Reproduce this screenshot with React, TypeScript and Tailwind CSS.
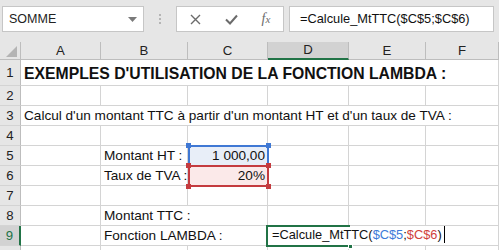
import React, { ReactNode } from 'react'

const font = "font-['Liberation_Sans',Arial,sans-serif]"

// column widths: row header, A, B, C, D, E, F
const widths = [
  'w-[21px]',
  'w-[80px]',
  'w-[87px]',
  'w-[80px]',
  'w-[81px]',
  'w-[77px]',
  'w-[73px]',
]

type Cell = {
  text?: ReactNode
  right?: boolean
  bold?: boolean
  open?: boolean // text runs over the next cell, hide the gridline
  className?: string
}

type Row = {
  n: number
  height: string
  cells: Cell[]
  active?: boolean
}

const rows: Row[] = [
  {
    n: 1,
    height: 'h-[26px]',
    cells: [
      { text: "EXEMPLES D'UTILISATION DE LA FONCTION LAMBDA :", bold: true, open: true },
      { open: true },
      { open: true },
      { open: true },
      { open: true },
      {},
    ],
  },
  { n: 2, height: 'h-[20px]', cells: [{}, {}, {}, {}, {}, {}] },
  {
    n: 3,
    height: 'h-[20px]',
    cells: [
      {
        text: "Calcul d'un montant TTC à partir d'un montant HT et d'un taux de TVA :",
        open: true,
      },
      { open: true },
      { open: true },
      { open: true },
      { open: true },
      {},
    ],
  },
  { n: 4, height: 'h-[20px]', cells: [{}, {}, {}, {}, {}, {}] },
  {
    n: 5,
    height: 'h-[20px]',
    cells: [
      {},
      { text: 'Montant HT :' },
      { text: '1 000,00', right: true, className: 'bg-[#e8eef8]' },
      {},
      {},
      {},
    ],
  },
  {
    n: 6,
    height: 'h-[20px]',
    cells: [
      {},
      { text: 'Taux de TVA :' },
      { text: '20%', right: true, className: 'bg-[#fbe9e9]' },
      {},
      {},
      {},
    ],
  },
  { n: 7, height: 'h-[20px]', cells: [{}, {}, {}, {}, {}, {}] },
  {
    n: 8,
    height: 'h-[20px]',
    cells: [{}, { text: 'Montant TTC :', open: true }, {}, {}, {}, {}],
  },
  {
    n: 9,
    height: 'h-[20px]',
    active: true,
    cells: [
      {},
      { text: 'Fonction LAMBDA :', open: true },
      {},
      {
        text: (
          <span className="text-[12.8px] pl-[1px]">
            =Calcule_MtTTC(<span className="text-[#3d7bd9]">$C$5</span>;
            <span className="text-[#d0413d]">$C$6</span>)
            <span className="inline-block w-px h-[17px] bg-black align-[-4px] ml-[2px]" />
          </span>
        ),
        open: true,
      },
      { open: true },
      {},
    ],
  },
  { n: 10, height: 'h-[20px]', cells: [{}, {}, {}, {}, {}, {}] },
]

export default function App() {
  return (
    <div className={`w-[499px] h-[250px] overflow-hidden bg-white text-[#111] ${font}`}>
      <FormulaBar />
      <div className="relative">
        <HeaderRow />
        {rows.map((row) => (
          <SheetRow key={row.n} row={row} />
        ))}
        <Selections />
      </div>
    </div>
  )
}

function FormulaBar() {
  return (
    <div className="h-[42px] bg-[#e6e6e6] flex items-start pt-[6px] pl-[2px]">
      <div className="w-[142px] h-[26px] bg-white border border-[#c6c6c6] flex items-center justify-between pl-[6px] pr-[6px]">
        <span className="text-[12.5px] text-[#222]">SOMME</span>
        <svg width="9" height="5" viewBox="0 0 9 5">
          <path d="M0 0h9L4.5 5z" fill="#7a7a7a" />
        </svg>
      </div>
      <div className="w-[32px] h-[26px] flex flex-col items-center justify-center gap-[2px]">
        <span className="w-[2px] h-[2px] bg-[#b5b5b5]" />
        <span className="w-[2px] h-[2px] bg-[#b5b5b5]" />
        <span className="w-[2px] h-[2px] bg-[#b5b5b5]" />
      </div>
      <div className="w-[108px] h-[26px] bg-white border border-[#c6c6c6] flex items-center">
        <div className="w-[36px] flex justify-center">
          <svg width="11" height="11" viewBox="0 0 11 11">
            <path d="M1 1l9 9M10 1l-9 9" stroke="#6b6b6b" strokeWidth="1.4" />
          </svg>
        </div>
        <div className="w-[36px] flex justify-center">
          <svg width="13" height="11" viewBox="0 0 13 11">
            <path d="M1 5.5l4 4L12 1.5" stroke="#6b6b6b" strokeWidth="2" fill="none" />
          </svg>
        </div>
        <div className="w-[34px] flex justify-center">
          <span className="font-['Liberation_Serif',serif] italic text-[14px] text-[#6b6b6b] leading-none">
            f<span className="text-[11px]">x</span>
          </span>
        </div>
      </div>
      <div className="ml-[5px] w-[205px] h-[26px] bg-white border border-[#c6c6c6] flex items-center pl-[10px]">
        <span className="text-[12.8px] text-[#111]">=Calcule_MtTTC($C$5;$C$6)</span>
      </div>
    </div>
  )
}

function HeaderRow() {
  const letters = ['A', 'B', 'C', 'D', 'E', 'F']
  return (
    <div className="flex h-[18px]">
      <div className={`${widths[0]} shrink-0 h-full bg-[#e6e6e6] border-r border-b border-[#bdbdbd] relative`}>
        <svg className="absolute right-[3px] bottom-[2px]" width="11" height="11" viewBox="0 0 11 11">
          <path d="M11 0V11H0z" fill="#b4b4b4" />
        </svg>
      </div>
      {letters.map((l, i) => (
        <div
          key={l}
          className={`${widths[i + 1]} shrink-0 h-full flex items-center justify-center text-[13.2px] border-r ${
            l === 'D'
              ? 'bg-[#d2d2d2] border-[#bdbdbd] border-b-2 border-b-[#217346] text-[#222]'
              : 'bg-[#e6e6e6] border-[#bdbdbd] border-b text-[#222]'
          }`}
        >
          {l}
        </div>
      ))}
    </div>
  )
}

function SheetRow({ row }: { row: Row }) {
  return (
    <div className={`flex ${row.height}`}>
      <div
        className={`${widths[0]} shrink-0 h-full flex items-center justify-center text-[13.2px] border-b border-b-[#d4d4d4] ${
          row.active
            ? 'bg-[#d2d2d2] border-r-2 border-r-[#217346] text-[#217346]'
            : 'bg-[#e6e6e6] border-r border-r-[#bdbdbd] text-[#222]'
        }`}
      >
        {row.n}
      </div>
      {row.cells.map((c, i) => (
        <div
          key={i}
          className={`${widths[i + 1]} shrink-0 h-full flex items-end border-b border-[#d4d4d4] whitespace-nowrap leading-none ${
            c.open ? '' : 'border-r'
          } ${c.right ? 'justify-end pr-[2px]' : 'pl-[3px]'} ${
            c.bold ? 'text-[15.75px] font-bold pb-[3px]' : 'text-[13.6px] pb-[2px]'
          } ${c.className ?? ''}`}
        >
          {c.text}
        </div>
      ))}
    </div>
  )
}

function Handle({ className }: { className: string }) {
  return <span className={`absolute w-[5px] h-[5px] ${className}`} />
}

function Selections() {
  return (
    <>
      {/* C5 reference */}
      <div className="absolute left-[188px] top-[103px] w-[81px] h-[22px] border-2 border-[#3f78d4]">
        <Handle className="bg-[#3f78d4] -left-[4px] -top-[4px]" />
        <Handle className="bg-[#3f78d4] -right-[4px] -top-[4px]" />
      </div>
      {/* C6 reference */}
      <div className="absolute left-[188px] top-[123px] w-[81px] h-[22px] border-2 border-[#c43b3f]">
        <Handle className="bg-[#c43b3f] -left-[4px] -top-[4px]" />
        <Handle className="bg-[#c43b3f] -right-[4px] -top-[4px]" />
        <Handle className="bg-[#c43b3f] -left-[4px] -bottom-[4px]" />
        <Handle className="bg-[#c43b3f] -right-[4px] -bottom-[4px]" />
      </div>
      {/* active cell D9, in edit mode: no right edge */}
      <div className="absolute left-[266px] top-[183px] w-[84px] h-[22px] border-2 border-r-0 border-[#217346]">
        <Handle className="bg-[#217346] -right-[3px] -bottom-[4px] border border-white" />
      </div>
    </>
  )
}
